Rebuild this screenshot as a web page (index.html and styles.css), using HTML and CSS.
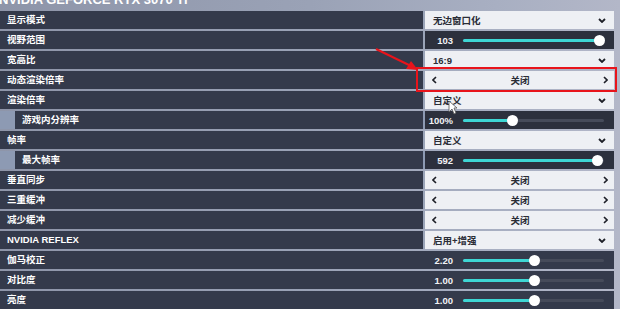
FILE: index.html
```html
<!DOCTYPE html>
<html lang="zh">
<head>
<meta charset="utf-8">
<link rel="stylesheet" href="styles.css">
</head>
<body>
<div class="screen">
  <div class="header"><div class="title">NVIDIA GEFORCE RTX 3070 Ti</div></div>
  <div class="list">
    <div class="row"><div class="label">显示模式</div><div class="ctl drop"><span>无边窗口化</span><svg class="chev" viewBox="0 0 8 5"><polyline points="1,1 4,4 7,1"/></svg></div></div>
    <div class="row"><div class="label">视野范围</div><div class="ctl slider"><span class="val">103</span><div class="track"><div class="fill" style="width:96.5%"></div><div class="thumb" style="left:96.5%"></div></div></div></div>
    <div class="row"><div class="label">宽高比</div><div class="ctl drop"><span>16:9</span><svg class="chev" viewBox="0 0 8 5"><polyline points="1,1 4,4 7,1"/></svg></div></div>
    <div class="row"><div class="label">动态渲染倍率</div><div class="ctl sel hl"><svg class="arr" viewBox="0 0 5 8"><polyline points="4,1 1,4 4,7"/></svg><span>关闭</span><svg class="arr" viewBox="0 0 5 8"><polyline points="1,1 4,4 1,7"/></svg></div></div>
    <div class="row"><div class="label">渲染倍率</div><div class="ctl drop"><span>自定义</span><svg class="chev" viewBox="0 0 8 5"><polyline points="1,1 4,4 7,1"/></svg></div></div>
    <div class="row sub"><div class="label">游戏内分辨率</div><div class="ctl slider"><span class="val">100%</span><div class="track"><div class="fill" style="width:35%"></div><div class="thumb" style="left:35%"></div></div></div></div>
    <div class="row"><div class="label">帧率</div><div class="ctl drop"><span>自定义</span><svg class="chev" viewBox="0 0 8 5"><polyline points="1,1 4,4 7,1"/></svg></div></div>
    <div class="row sub"><div class="label">最大帧率</div><div class="ctl slider"><span class="val">592</span><div class="track"><div class="fill" style="width:95%"></div><div class="thumb" style="left:95%"></div></div></div></div>
    <div class="row"><div class="label">垂直同步</div><div class="ctl sel"><svg class="arr" viewBox="0 0 5 8"><polyline points="4,1 1,4 4,7"/></svg><span>关闭</span><svg class="arr" viewBox="0 0 5 8"><polyline points="1,1 4,4 1,7"/></svg></div></div>
    <div class="row"><div class="label">三重缓冲</div><div class="ctl sel"><svg class="arr" viewBox="0 0 5 8"><polyline points="4,1 1,4 4,7"/></svg><span>关闭</span><svg class="arr" viewBox="0 0 5 8"><polyline points="1,1 4,4 1,7"/></svg></div></div>
    <div class="row"><div class="label">减少缓冲</div><div class="ctl sel"><svg class="arr" viewBox="0 0 5 8"><polyline points="4,1 1,4 4,7"/></svg><span>关闭</span><svg class="arr" viewBox="0 0 5 8"><polyline points="1,1 4,4 1,7"/></svg></div></div>
    <div class="row"><div class="label">NVIDIA REFLEX</div><div class="ctl drop"><span>启用+增强</span><svg class="chev" viewBox="0 0 8 5"><polyline points="1,1 4,4 7,1"/></svg></div></div>
    <div class="row joined"><div class="label">伽马校正</div><div class="ctl slider"><span class="val">2.20</span><div class="track"><div class="fill" style="width:50%"></div><div class="thumb" style="left:50%"></div></div></div></div>
    <div class="row joined"><div class="label">对比度</div><div class="ctl slider"><span class="val">1.00</span><div class="track"><div class="fill" style="width:50%"></div><div class="thumb" style="left:50%"></div></div></div></div>
    <div class="row joined"><div class="label">亮度</div><div class="ctl slider"><span class="val">1.00</span><div class="track"><div class="fill" style="width:50%"></div><div class="thumb" style="left:50%"></div></div></div></div>
  </div>
  <svg class="annot" width="60" height="40" viewBox="0 0 60 40">
    <line x1="3" y1="7" x2="38" y2="24" stroke="#e8141b" stroke-width="2"/>
    <polygon points="45,28 33,27 38,19" fill="#e8141b"/>
  </svg>
  <svg class="cursor" width="10" height="16" viewBox="0 0 10 16">
    <polygon points="1,1 1,12 4,9 6,14 8,13 6,8 9,8" fill="#ffffff" stroke="#555" stroke-width="0.8"/>
  </svg>
</div>
</body>
</html>
```
FILE: styles.css
```css
html, body {
  margin: 0;
  padding: 0;
}
body {
  width: 620px;
  height: 309px;
  overflow: hidden;
  background: linear-gradient(90deg, #8e95a9 0%, #9aa2b6 50%, #a8afc2 80%, #b3b7c8 100%);
  font-family: "Liberation Sans", "Noto Sans CJK SC", sans-serif;
  font-weight: bold;
  font-size: 9.5px;
}
.screen {
  position: relative;
  width: 620px;
  height: 309px;
}
.header {
  height: 11px;
  overflow: hidden;
}
.title {
  margin-top: -7px;
  margin-left: -1px;
  font-size: 13px;
  line-height: 14px;
  color: #ffffff;
  white-space: nowrap;
}
.list {
  display: flex;
  flex-direction: column;
  gap: 2px;
  width: 614px;
}
.row {
  display: flex;
  height: 18px;
  gap: 2px;
  background: #9aa4b8;
}
.row.sub {
  padding-left: 15px;
  background: #8d9ab3;
}
.label {
  flex: 1;
  background: #343a4b;
  color: #ffffff;
  line-height: 18px;
  padding-left: 7px;
  white-space: nowrap;
}
.sub .label {
  padding-left: 7px;
}
.ctl {
  width: 189px;
  flex: none;
  box-sizing: border-box;
  display: flex;
  align-items: center;
}
.drop, .sel {
  background: #eef0f4;
  color: #2a2d36;
}
.drop {
  padding: 0 8px 0 8px;
  justify-content: space-between;
}
.chev {
  width: 8px;
  height: 5px;
  fill: none;
  stroke: #1e2028;
  stroke-width: 1.8;
}
.sel {
  padding: 0 6px 0 7px;
  justify-content: space-between;
}
.arr {
  width: 5px;
  height: 8px;
  fill: none;
  stroke: #1e2028;
  stroke-width: 1.6;
}
.sel span {
  font-weight: bold;
}
.slider {
  background: #2c303d;
  color: #f2f3f6;
  padding-right: 10px;
}
.row.joined {
  gap: 0;
  background: #343a4b;
}
.joined .slider {
  background: #343a4b;
}
.val {
  width: 28px;
  text-align: right;
  flex: none;
}
.track {
  position: relative;
  margin-left: 10px;
  flex: 1;
  height: 3px;
  border-radius: 2px;
  background: #464b5a;
}
.fill {
  height: 3px;
  border-radius: 2px;
  background: #3ed6d4;
}
.thumb {
  position: absolute;
  top: -4px;
  width: 11px;
  height: 11px;
  margin-left: -5px;
  border-radius: 50%;
  background: #ffffff;
}
.hl {
  position: relative;
}
.hl::after {
  content: "";
  position: absolute;
  left: -9px;
  top: -4px;
  right: -3px;
  bottom: -3px;
  border: 2px solid #e8141b;
}
.annot {
  position: absolute;
  left: 373px;
  top: 42px;
}
.cursor {
  position: absolute;
  left: 448px;
  top: 100px;
}
```
